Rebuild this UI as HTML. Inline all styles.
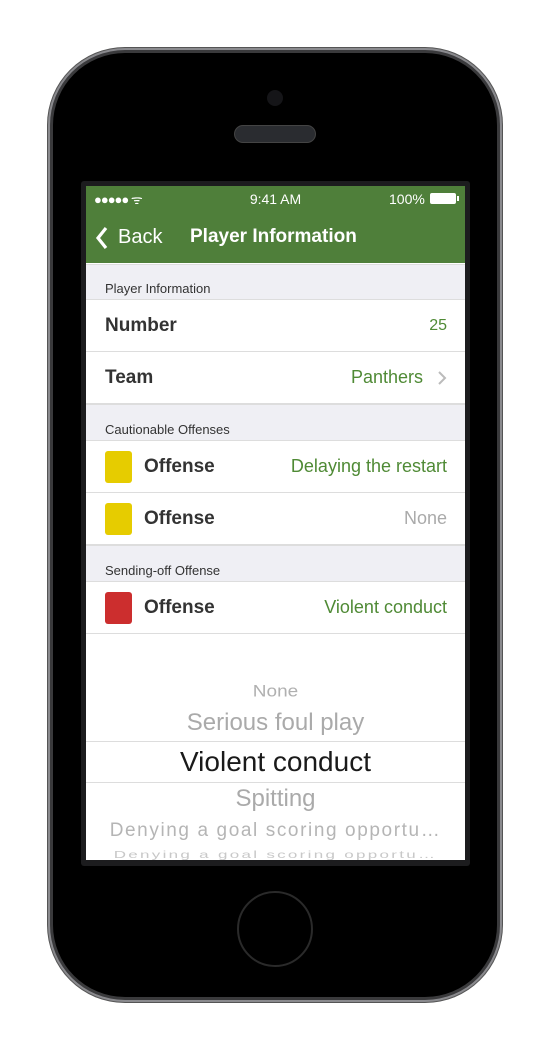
<!DOCTYPE html>
<html><head><style>
body{margin:0;width:546px;height:1049px;background:#fff;position:relative;overflow:hidden;font-family:"Liberation Sans",sans-serif}
.abs{position:absolute}
.phone{left:53px;top:53px;width:444px;height:944px;border-radius:72px;background:#000;box-shadow:0 0 0 3px #3a3a3c,0 0 0 5px #8a8a8e,0 0 0 6px #555}
.screen{left:86px;top:186px;width:379px;height:674px;background:#fff;overflow:hidden}
.frame{left:81px;top:181px;width:389px;height:685px;background:#1c1c1e;border-radius:3px}
.hdr{left:0;top:0;width:379px;height:77px;background:#4f7f3a;color:#fff}
.sec{left:0;width:379px;background:#efeff4;color:#333;font-size:13px;border-top:1px solid #ddd;border-bottom:1px solid #ddd;box-sizing:border-box}
.row{left:0;width:379px;height:52px;border-bottom:1px solid #ddd;box-sizing:border-box;font-size:19px;font-weight:bold;color:#333}
.val{position:absolute;right:18px;top:15px;font-weight:normal;color:#4f8a35;font-size:18px}
.sq{position:absolute;left:19px;top:10px;width:27px;height:32px;border-radius:3px}
.lbl{position:absolute;left:58px;top:15px}
.pk{left:0;width:379px;text-align:center;color:#aaa;white-space:nowrap}
</style></head><body>
<div class="abs" style="left:352px;top:47px;width:42px;height:8px;background:#444;border-radius:2px"></div>
<div class="abs" style="left:48px;top:182px;width:6px;height:42px;background:#444;border-radius:2px"></div>
<div class="abs" style="left:48px;top:270px;width:6px;height:34px;background:#444;border-radius:2px"></div>
<div class="abs" style="left:48px;top:350px;width:6px;height:34px;background:#444;border-radius:2px"></div>
<div class="abs phone"></div>
<div class="abs" style="left:267px;top:90px;width:16px;height:16px;border-radius:50%;background:#151518"></div>
<div class="abs" style="left:234px;top:125px;width:82px;height:18px;border-radius:9px;background:#2a2c30;border:1px solid #444;box-sizing:border-box"></div>
<div class="abs" style="left:237px;top:891px;width:76px;height:76px;border-radius:50%;border:2px solid #2a2a2a;box-sizing:border-box"></div>
<div class="abs frame"></div>
<div class="abs screen">
 <div class="abs hdr">
  <div class="abs" style="left:8px;top:4px;font-size:13px;letter-spacing:-1px">●●●●● <span style="letter-spacing:0">ᯤ</span></div>
  <div class="abs" style="left:0;width:379px;top:5px;text-align:center;font-size:14px">9:41 AM</div>
  <div class="abs" style="left:303px;top:5px;font-size:14px">100%</div>
  <div class="abs" style="left:344px;top:7px;width:26px;height:11px;background:#fff;border-radius:2px"></div>
  <div class="abs" style="left:371px;top:10px;width:2px;height:5px;background:#fff"></div>
  <svg class="abs" style="left:9px;top:40px" width="14" height="24"><path d="M11 2 L3 12 L11 22" stroke="#fff" stroke-width="3.2" fill="none"/></svg>
  <div class="abs" style="left:32px;top:40px;font-size:20px">Back</div>
  <div class="abs" style="left:104px;top:40px;font-size:19px;font-weight:bold">Player Information</div>
 </div>
 <div class="abs sec" style="top:78px;height:36px;padding:16px 0 0 19px">Player Information</div>
 <div class="abs row" style="top:114px"><span class="abs" style="left:19px;top:15px">Number</span><span class="val" style="font-size:16px;top:17px">25</span></div>
 <div class="abs row" style="top:166px"><span class="abs" style="left:19px;top:15px">Team</span><span class="val" style="right:42px">Panthers</span><svg class="abs" style="left:351px;top:18px" width="10" height="16"><path d="M2 2 L8 8 L2 14" stroke="#bbb" stroke-width="2" fill="none"/></svg></div>
 <div class="abs sec" style="top:218px;height:37px;padding:17px 0 0 19px">Cautionable Offenses</div>
 <div class="abs row" style="top:255px"><div class="sq" style="background:#e6cc00"></div><span class="lbl">Offense</span><span class="val">Delaying the restart</span></div>
 <div class="abs row" style="top:307px"><div class="sq" style="background:#e6cc00"></div><span class="lbl">Offense</span><span class="val" style="color:#aaa">None</span></div>
 <div class="abs sec" style="top:359px;height:37px;padding:17px 0 0 19px">Sending-off Offense</div>
 <div class="abs row" style="top:396px"><div class="sq" style="background:#cc2e2e"></div><span class="lbl">Offense</span><span class="val">Violent conduct</span></div>
 <div class="abs pk" style="top:495px;font-size:19px;color:#b0b0b0;transform:scaleY(.85)">None</div>
 <div class="abs pk" style="top:523px;font-size:24px">Serious foul play</div>
 <div class="abs" style="left:0;top:555px;width:379px;height:1px;background:#ddd"></div>
 <div class="abs pk" style="top:560px;font-size:28px;color:#1a1a1a">Violent conduct</div>
 <div class="abs" style="left:0;top:596px;width:379px;height:1px;background:#ddd"></div>
 <div class="abs pk" style="top:599px;font-size:24px">Spitting</div>
 <div class="abs pk" style="top:634px;font-size:19px;letter-spacing:1.6px;color:#b5b5b5">Denying a goal scoring opportu…</div>
 <div class="abs pk" style="top:659px;font-size:17px;letter-spacing:2.3px;color:#c8c8c8;transform:scaleY(.6)">Denying a goal scoring opportu…</div>
</div>
</body></html>
